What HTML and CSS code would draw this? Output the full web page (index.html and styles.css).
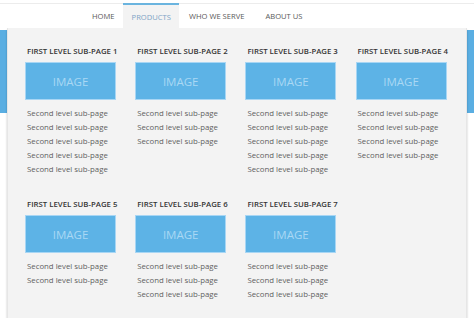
FILE: index.html
```html
<!DOCTYPE html>
<html>
<head>
<meta charset="UTF-8">
<title>mega menu</title>
<link rel="stylesheet" href="styles.css">
</head>
<body>

<header class="topbar">
	<nav>
		<ul class="menu">
			<li><a href="#">HOME</a></li>
			<li class="active"><a href="#">PRODUCTS</a></li>
			<li><a href="#">WHO WE SERVE</a></li>
			<li class="last"><a href="#">ABOUT US</a></li>
		</ul>
	</nav>
</header>

<section class="stage">
	<div class="hero"></div>

	<div class="dropdown">
		<div class="row">
			<div class="col">
				<h4>FIRST LEVEL SUB-PAGE 1</h4>
				<div class="pic">IMAGE</div>
				<ul class="links">
					<li>Second level sub-page</li>
					<li>Second level sub-page</li>
					<li>Second level sub-page</li>
					<li>Second level sub-page</li>
					<li>Second level sub-page</li>
				</ul>
			</div>
			<div class="col">
				<h4>FIRST LEVEL SUB-PAGE 2</h4>
				<div class="pic">IMAGE</div>
				<ul class="links">
					<li>Second level sub-page</li>
					<li>Second level sub-page</li>
					<li>Second level sub-page</li>
				</ul>
			</div>
			<div class="col">
				<h4>FIRST LEVEL SUB-PAGE 3</h4>
				<div class="pic">IMAGE</div>
				<ul class="links">
					<li>Second level sub-page</li>
					<li>Second level sub-page</li>
					<li>Second level sub-page</li>
					<li>Second level sub-page</li>
					<li>Second level sub-page</li>
				</ul>
			</div>
			<div class="col">
				<h4>FIRST LEVEL SUB-PAGE 4</h4>
				<div class="pic">IMAGE</div>
				<ul class="links">
					<li>Second level sub-page</li>
					<li>Second level sub-page</li>
					<li>Second level sub-page</li>
					<li>Second level sub-page</li>
				</ul>
			</div>
		</div>

		<div class="row">
			<div class="col">
				<h4>FIRST LEVEL SUB-PAGE 5</h4>
				<div class="pic">IMAGE</div>
				<ul class="links">
					<li>Second level sub-page</li>
					<li>Second level sub-page</li>
				</ul>
			</div>
			<div class="col">
				<h4>FIRST LEVEL SUB-PAGE 6</h4>
				<div class="pic">IMAGE</div>
				<ul class="links">
					<li>Second level sub-page</li>
					<li>Second level sub-page</li>
					<li>Second level sub-page</li>
				</ul>
			</div>
			<div class="col">
				<h4>FIRST LEVEL SUB-PAGE 7</h4>
				<div class="pic">IMAGE</div>
				<ul class="links">
					<li>Second level sub-page</li>
					<li>Second level sub-page</li>
					<li>Second level sub-page</li>
				</ul>
			</div>
		</div>
	</div>
</section>

</body>
</html>
```

FILE: styles.css
```css
body {
  margin: 0;
  background-color: #fff;
  font-family: "Open Sans", "Liberation Sans", sans-serif;
}

/* 상단 메뉴 */
.topbar {
  margin-top: 3px;
  border-top: 1px solid #ececec;
  height: 24px;
}
.menu {
  display: flex;
  margin: 0;
  padding: 0 0 0 84px;
  list-style: none;
}
.menu>li {
  height: 24px;
  padding: 0 8px;
  display: flex;
  align-items: center;
  border-top: 1px solid transparent;
  margin-top: -1px;
}
.menu>li>a {
  text-decoration: none;
  color: #5a5a5a;
  font-size: 7.6px;
}
.menu>li.active {
  background-color: #f3f3f3;
  border-top: 2px solid #6ab4df;
  padding: 0 8px 0 9px;
  margin-right: 2px;
}
.menu>li.active>a {
  color: #7fa4c6;
}
.menu>li.last {
  margin-left: 5px;
}

/* 배너 + 드롭다운 (같은 그리드 칸에 겹침) */
.stage {
  display: grid;
}
.hero {
  grid-area: 1 / 1;
  align-self: start;
  margin-top: 2px;
  height: 83px;
  background-color: #5aaee2;
}
.dropdown {
  grid-area: 1 / 1;
  margin: 0 8px 0 7px;
  height: 290px;
  box-sizing: border-box;
  padding: 18px 0 0 17px;
  background-color: #f3f3f3;
  border-left: 1px solid #e6e6e6;
  border-right: 1px solid #e6e6e6;
  box-shadow: 0 2px 2px rgba(0,0,0,.22);
}
.row {
  display: flex;
  margin-bottom: 23px;
}
.col {
  width: 110.2px;
}
.col>h4 {
  margin: 0 0 0 2px;
  font-size: 7.8px;
  line-height: 10px;
  font-weight: 600;
  color: #333;
}
.pic {
  margin-top: 6px;
  width: 91px;
  height: 38px;
  box-sizing: border-box;
  border: 1.5px solid #a8d6f4;
  background-color: #5db3e6;
  color: #a9d8f4;
  font-size: 11.5px;
  display: flex;
  align-items: center;
  justify-content: center;
}
.links {
  margin: 6px 0 0 0;
  padding: 0 0 0 2px;
  list-style: none;
}
.links>li {
  font-size: 7.8px;
  line-height: 14px;
  color: #5f5f5f;
}
```
